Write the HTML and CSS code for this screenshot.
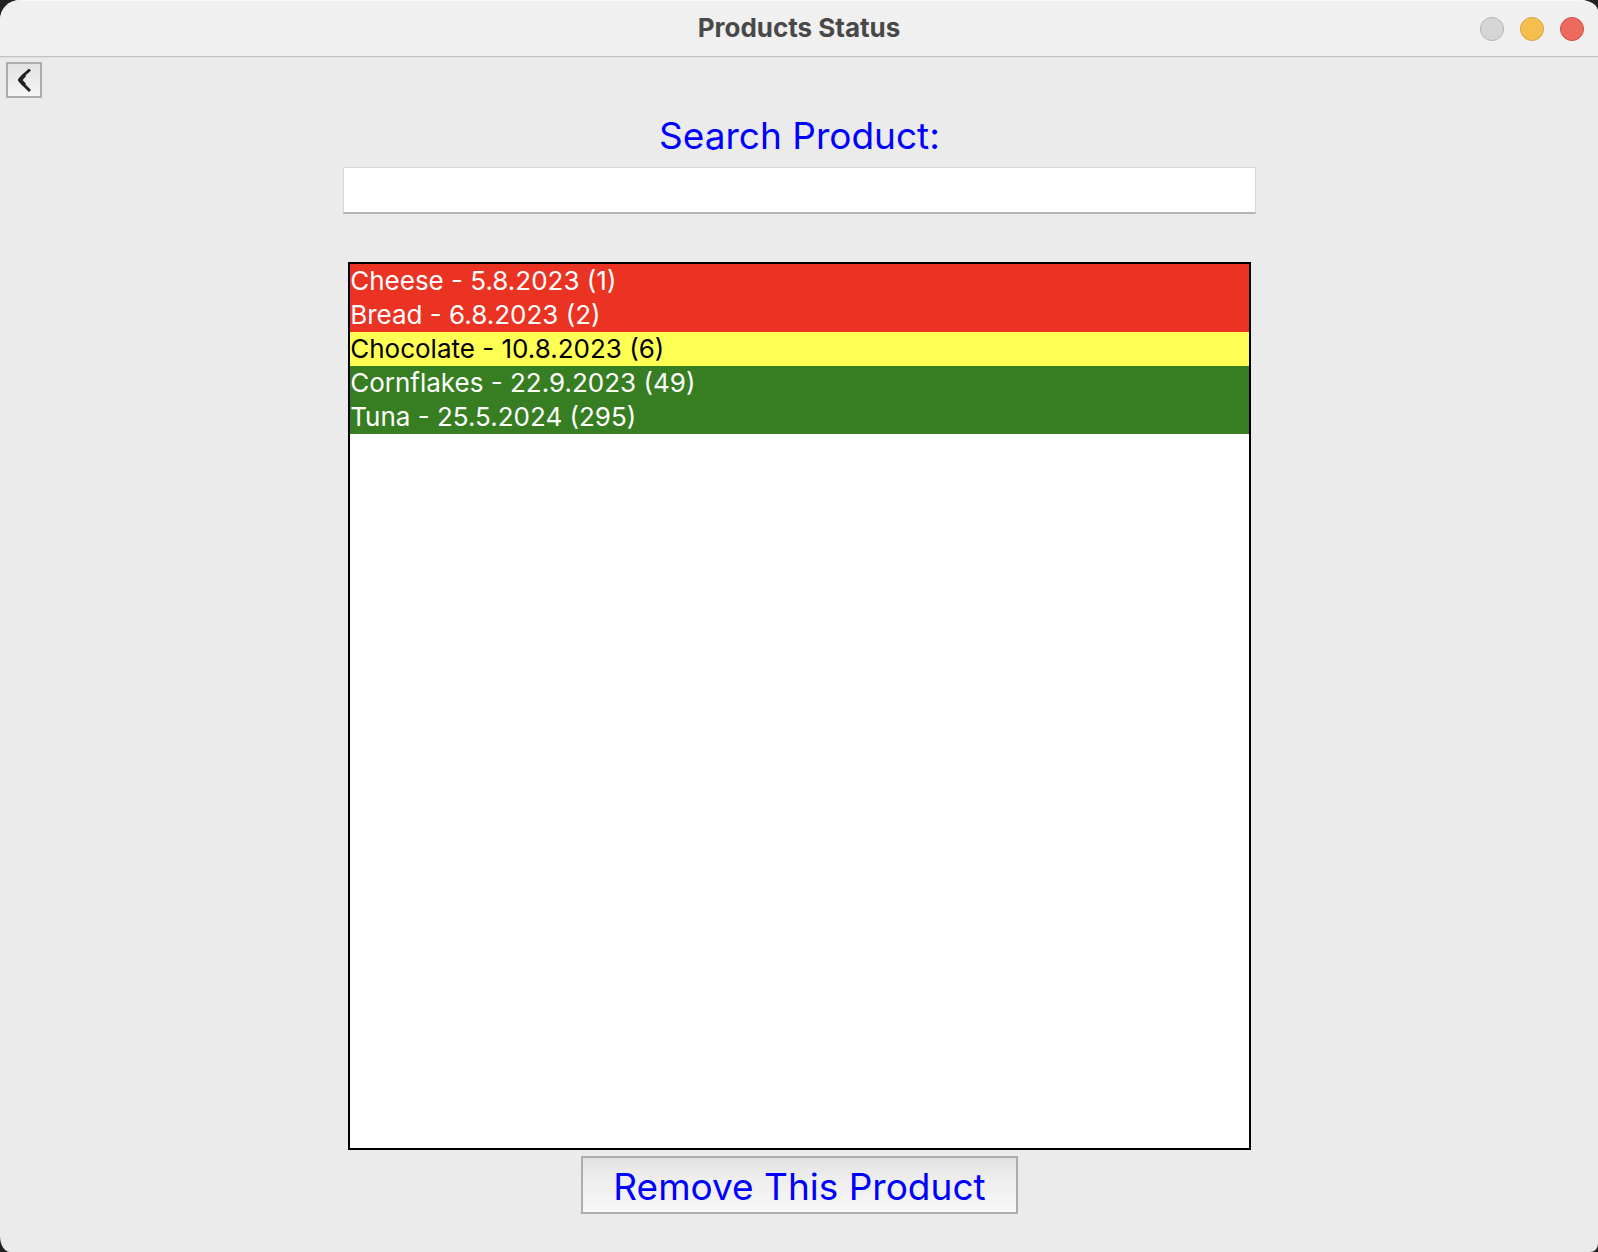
FILE: index.html
```html
<!DOCTYPE html>
<html lang="en">
<head>
<meta charset="utf-8">
<title>Products Status</title>
<link rel="stylesheet" href="styles.css">
</head>
<body>
<div class="window">
  <header class="titlebar">
    <h1 class="title">Products Status</h1>
    <div class="controls">
      <button class="control control-zoom" type="button" aria-label="Zoom"></button>
      <button class="control control-minimize" type="button" aria-label="Minimize"></button>
      <button class="control control-close" type="button" aria-label="Close"></button>
    </div>
  </header>
  <nav class="toolbar">
    <button class="back" type="button" aria-label="Back">
      <svg class="back-icon" width="32" height="32" viewBox="0 0 32 32" fill="none" stroke="#222" stroke-width="3" stroke-linecap="butt" stroke-linejoin="round"><path d="M22 5.500L17 10L11.500 16L17 22L22 27"/><path d="M16.500 11L12 16L16.500 21" stroke-width="4"/></svg>
    </button>
  </nav>
  <main class="content">
    <label class="search-label" for="search">Search Product:</label>
    <input class="search" id="search" type="text">
    <ul class="products">
      <li class="product expired">Cheese - 5.8.2023 (1)</li>
      <li class="product expired">Bread - 6.8.2023 (2)</li>
      <li class="product soon">Chocolate - 10.8.2023 (6)</li>
      <li class="product fresh">Cornflakes - 22.9.2023 (49)</li>
      <li class="product fresh">Tuna - 25.5.2024 (295)</li>
    </ul>
    <button class="remove" type="button">Remove This Product</button>
  </main>
</div>
</body>
</html>
```
FILE: styles.css
```css
* {
  box-sizing: border-box;
}

body {
  margin: 0;
  background: #222;
  font-family: Inter, "Liberation Sans", sans-serif;
}

button {
  margin: 0;
  padding: 0;
  font-family: inherit;
}

.window {
  display: flex;
  flex-direction: column;
  min-height: 100vh;
  overflow: hidden;
  background: #ebebeb;
  border-radius: 20px 18px 8px 10px / 20px 12px 8px 16px;
}

.titlebar {
  display: grid;
  grid-template-columns: 1fr auto 1fr;
  align-items: center;
  height: 57px;
  padding: 0 14px;
  background: #f0f0f0;
  border-top: 1px solid #f8f8f8;
  border-bottom: 1px solid #c4c4c4;
}

.title {
  grid-column: 2;
  margin: 0;
  padding-bottom: 2px;
  color: #484848;
  font-size: 26px;
  line-height: 52px;
  font-weight: 700;
}

.controls {
  display: flex;
  justify-content: flex-end;
  gap: 16px;
}

.control {
  width: 24px;
  height: 24px;
  border: 1px solid;
  border-radius: 50%;
}

.control-zoom {
  background: #d6d6d6;
  border-color: #b4b4b4;
}

.control-minimize {
  background: #f5bf4f;
  border-color: #d6a243;
}

.control-close {
  background: #ed6a5e;
  border-color: #d04e42;
}

.toolbar {
  padding: 4px 6px 0;
  border-top: 1px solid #dedede;
}

.back {
  display: block;
  width: 36px;
  height: 36px;
  border: 2px solid #adadad;
  background: linear-gradient(#e2e2e2, #f6f6f6);
}

.back-icon {
  display: block;
}

.content {
  display: grid;
  grid-template-columns: 3fr 8fr 3fr;
  grid-template-rows: auto auto 1fr auto;
  flex: 1;
  padding: 12px 0 38px 1px;
}

.search-label,
.search,
.products,
.remove {
  grid-column: 2;
}

.search-label,
.remove {
  color: #00f;
  font-size: 37px;
  font-weight: 400;
}

.search-label {
  justify-self: center;
  line-height: 52px;
  margin-bottom: 5px;
}

.search {
  width: 100%;
  height: 47px;
  padding: 0 8px;
  border: 1px solid #d6d6d6;
  border-bottom: 2px solid #b4b4b4;
  border-radius: 0;
  background: #fff;
  font-family: inherit;
  font-size: 26px;
  outline: none;
}

.products {
  list-style: none;
  margin: 48px 5px 6px;
  padding: 0;
  border: 2px solid #000;
  background: #fff;
}

.product {
  font-size: 26px;
  line-height: 34px;
  font-weight: 400;
}

.expired {
  background: #eb3324;
  color: #fff;
}

.soon {
  background: #ffff54;
  color: #000;
}

.fresh {
  background: #377e22;
  color: #fff;
}

.remove {
  justify-self: center;
  height: 58px;
  padding: 4px 30px 0;
  border: 2px solid #adadad;
  background: linear-gradient(#e2e2e2, #ededed 35%, #f7f7f7);
  line-height: 50px;
}
```
